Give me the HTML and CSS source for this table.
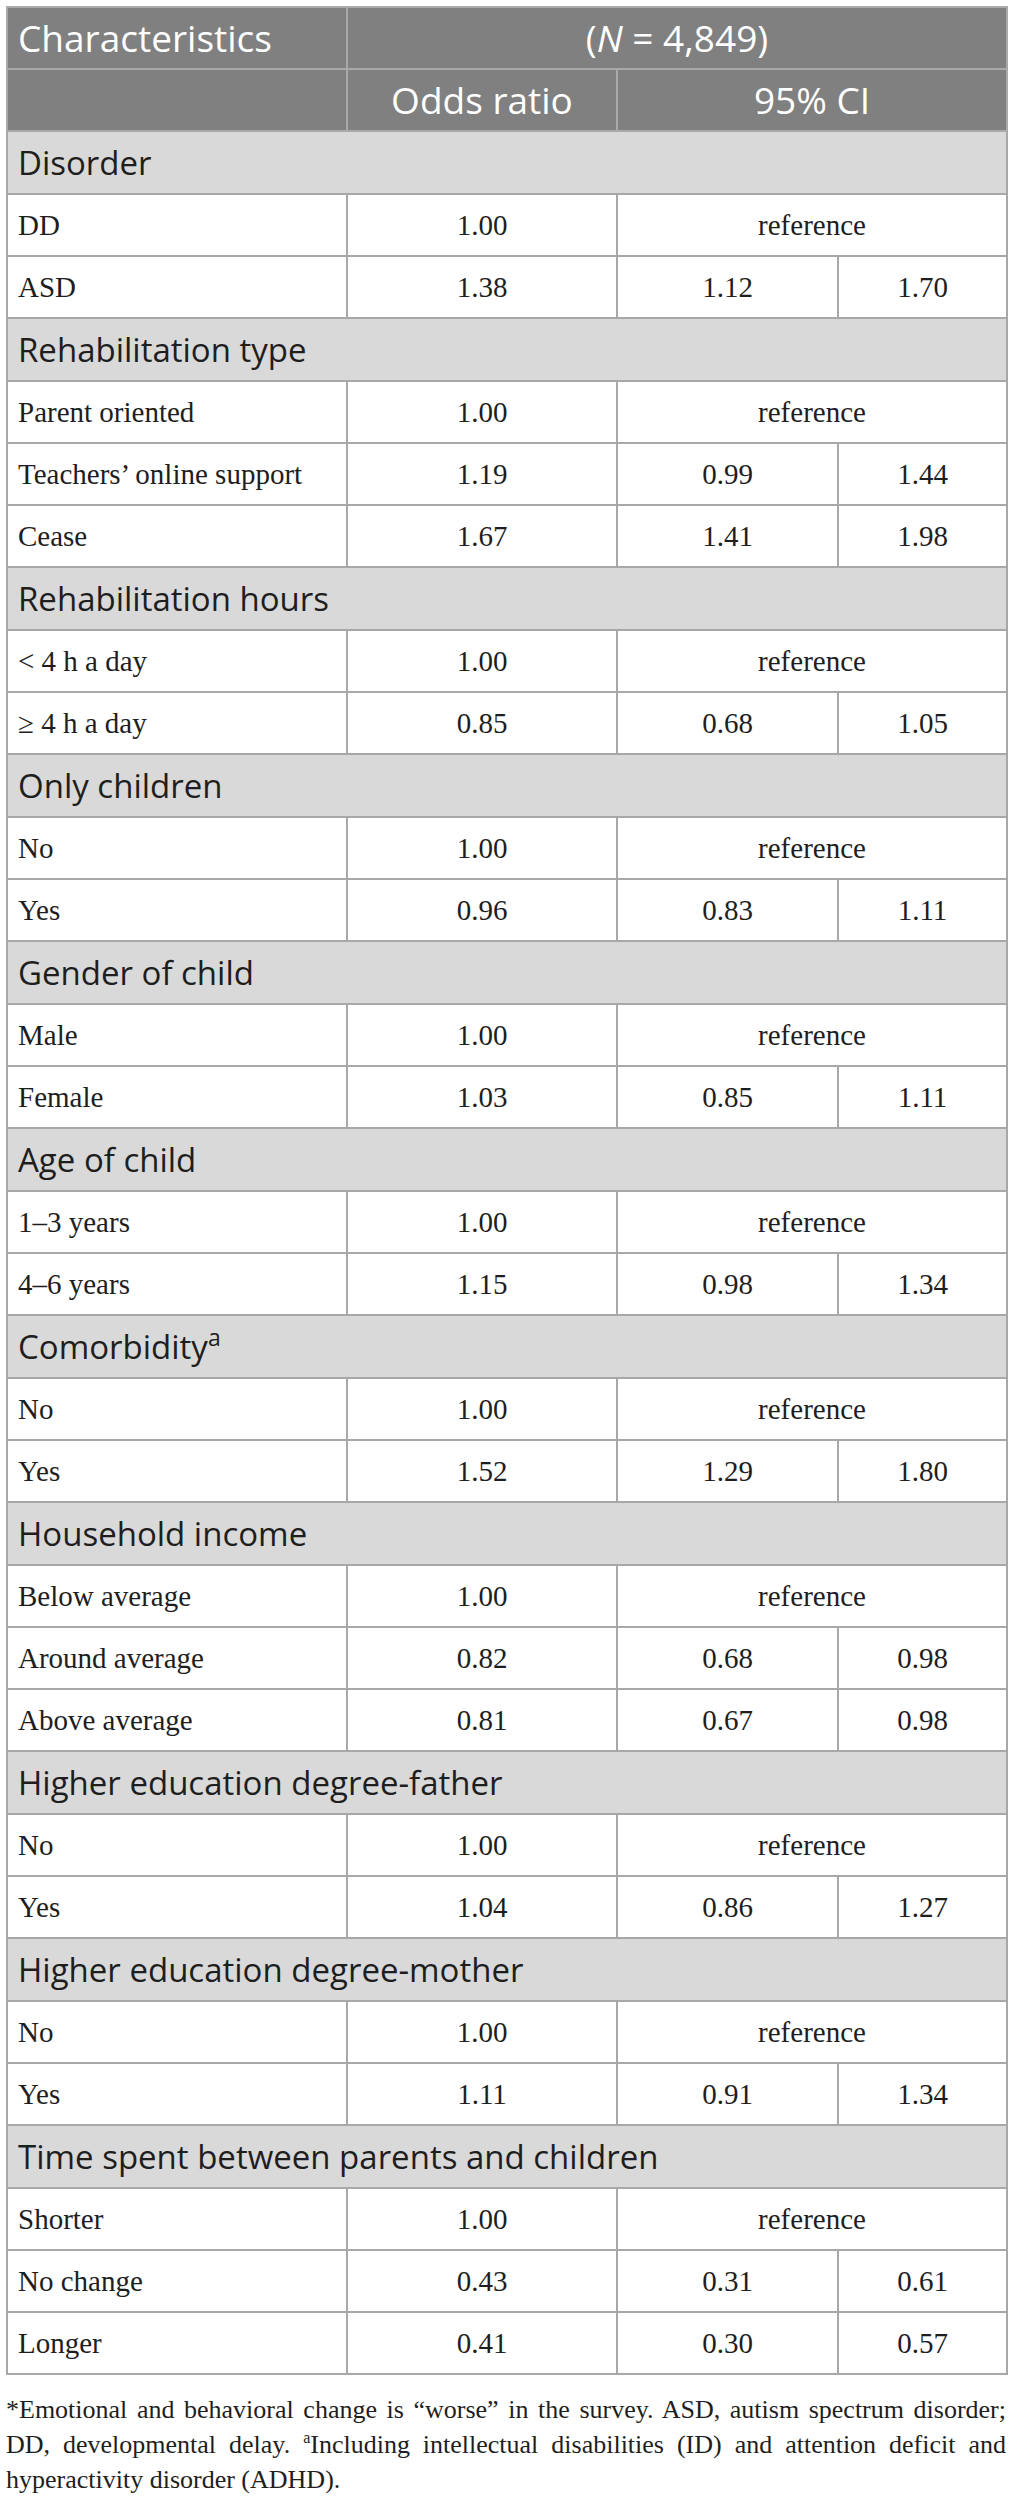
FILE: index.html
```html
<!DOCTYPE html>
<html lang="en">
<head>
    <meta charset="UTF-8">
    <meta name="viewport" content="width=device-width, initial-scale=1.0">
    <title>Odds ratios</title>
    <link rel="stylesheet" href="styles.css">
</head>
<body>
    <div class="container">
        <table class="tabla">
            <colgroup>
                <col class="col-nombre">
                <col class="col-or">
                <col class="col-ci">
                <col class="col-ci2">
            </colgroup>
            <thead>
                <tr>
                    <th class="izq">Characteristics</th>
                    <th colspan="3">(<i>N</i> = 4,849)</th>
                </tr>
                <tr>
                    <th></th>
                    <th>Odds ratio</th>
                    <th colspan="2">95% CI</th>
                </tr>
            </thead>
            <tbody>
                <tr class="seccion"><td colspan="4">Disorder</td></tr>
                <tr><td>DD</td><td>1.00</td><td colspan="2">reference</td></tr>
                <tr><td>ASD</td><td>1.38</td><td>1.12</td><td>1.70</td></tr>

                <tr class="seccion"><td colspan="4">Rehabilitation type</td></tr>
                <tr><td>Parent oriented</td><td>1.00</td><td colspan="2">reference</td></tr>
                <tr><td>Teachers’ online support</td><td>1.19</td><td>0.99</td><td>1.44</td></tr>
                <tr><td>Cease</td><td>1.67</td><td>1.41</td><td>1.98</td></tr>

                <tr class="seccion"><td colspan="4">Rehabilitation hours</td></tr>
                <tr><td>&lt; 4 h a day</td><td>1.00</td><td colspan="2">reference</td></tr>
                <tr><td>≥ 4 h a day</td><td>0.85</td><td>0.68</td><td>1.05</td></tr>

                <tr class="seccion"><td colspan="4">Only children</td></tr>
                <tr><td>No</td><td>1.00</td><td colspan="2">reference</td></tr>
                <tr><td>Yes</td><td>0.96</td><td>0.83</td><td>1.11</td></tr>

                <tr class="seccion"><td colspan="4">Gender of child</td></tr>
                <tr><td>Male</td><td>1.00</td><td colspan="2">reference</td></tr>
                <tr><td>Female</td><td>1.03</td><td>0.85</td><td>1.11</td></tr>

                <tr class="seccion"><td colspan="4">Age of child</td></tr>
                <tr><td>1–3 years</td><td>1.00</td><td colspan="2">reference</td></tr>
                <tr><td>4–6 years</td><td>1.15</td><td>0.98</td><td>1.34</td></tr>

                <tr class="seccion"><td colspan="4">Comorbidity<sup>a</sup></td></tr>
                <tr><td>No</td><td>1.00</td><td colspan="2">reference</td></tr>
                <tr><td>Yes</td><td>1.52</td><td>1.29</td><td>1.80</td></tr>

                <tr class="seccion"><td colspan="4">Household income</td></tr>
                <tr><td>Below average</td><td>1.00</td><td colspan="2">reference</td></tr>
                <tr><td>Around average</td><td>0.82</td><td>0.68</td><td>0.98</td></tr>
                <tr><td>Above average</td><td>0.81</td><td>0.67</td><td>0.98</td></tr>

                <tr class="seccion"><td colspan="4">Higher education degree-father</td></tr>
                <tr><td>No</td><td>1.00</td><td colspan="2">reference</td></tr>
                <tr><td>Yes</td><td>1.04</td><td>0.86</td><td>1.27</td></tr>

                <tr class="seccion"><td colspan="4">Higher education degree-mother</td></tr>
                <tr><td>No</td><td>1.00</td><td colspan="2">reference</td></tr>
                <tr><td>Yes</td><td>1.11</td><td>0.91</td><td>1.34</td></tr>

                <tr class="seccion"><td colspan="4">Time spent between parents and children</td></tr>
                <tr><td>Shorter</td><td>1.00</td><td colspan="2">reference</td></tr>
                <tr><td>No change</td><td>0.43</td><td>0.31</td><td>0.61</td></tr>
                <tr><td>Longer</td><td>0.41</td><td>0.30</td><td>0.57</td></tr>
            </tbody>
        </table>

        <div class="nota">
            <span class="linea">*Emotional and behavioral change is “worse” in the survey. ASD, autism spectrum disorder;</span>
            <span class="linea">DD, developmental delay. <sup>a</sup>Including intellectual disabilities (ID) and attention deficit and</span>
            <span class="linea ultima">hyperactivity disorder (ADHD).</span>
        </div>
    </div>
</body>
</html>
```

FILE: styles.css
```css
body {
    margin: 0;
    padding: 0;
    background-color: #fff;
    color: #1e1e1e;
    font-family: "Liberation Serif", "Times New Roman", serif;
}

.container {
    padding: 6px 8px 0 6px;
}

.tabla {
    width: 1000px;
    border-collapse: collapse;
    table-layout: fixed;
    border: 2px solid #a8a8a8;
}

.col-nombre { width: 340px; }
.col-or     { width: 270px; }
.col-ci     { width: 221px; }
.col-ci2    { width: 169px; }

.tabla th,
.tabla td {
    height: 62px;
    box-sizing: border-box;
    border: 2px solid #a8a8a8;
    padding: 0 10px;
    vertical-align: middle;
    white-space: nowrap;
    line-height: 1.2;
}

/* cabecera gris oscura */
.tabla th {
    background-color: #808080;
    color: #fff;
    font-family: "Open Sans", sans-serif;
    font-size: 37px;
    font-weight: normal;
    text-align: center;
    border-color: #a9a9a9;
}

.tabla th.izq {
    text-align: left;
}

.tabla td {
    font-size: 29px;
    text-align: center;
}

.tabla td:first-child {
    text-align: left;
}

/* filas de grupo */
.tabla .seccion td {
    height: 63px;
    background-color: #d9d9d9;
    font-family: "Open Sans", sans-serif;
    font-size: 33px;
    text-align: left;
}

.seccion sup {
    font-size: 23px;
    line-height: 0;
    vertical-align: 13px;
}

.nota {
    width: 1000px;
    margin-top: 17px;
    font-size: 26px;
    line-height: 35px;
}

.linea {
    display: block;
    text-align: justify;
    text-align-last: justify;
}

.linea.ultima {
    text-align-last: left;
}

.nota sup {
    font-size: 16px;
    line-height: 0;
    vertical-align: 10px;
}
```
